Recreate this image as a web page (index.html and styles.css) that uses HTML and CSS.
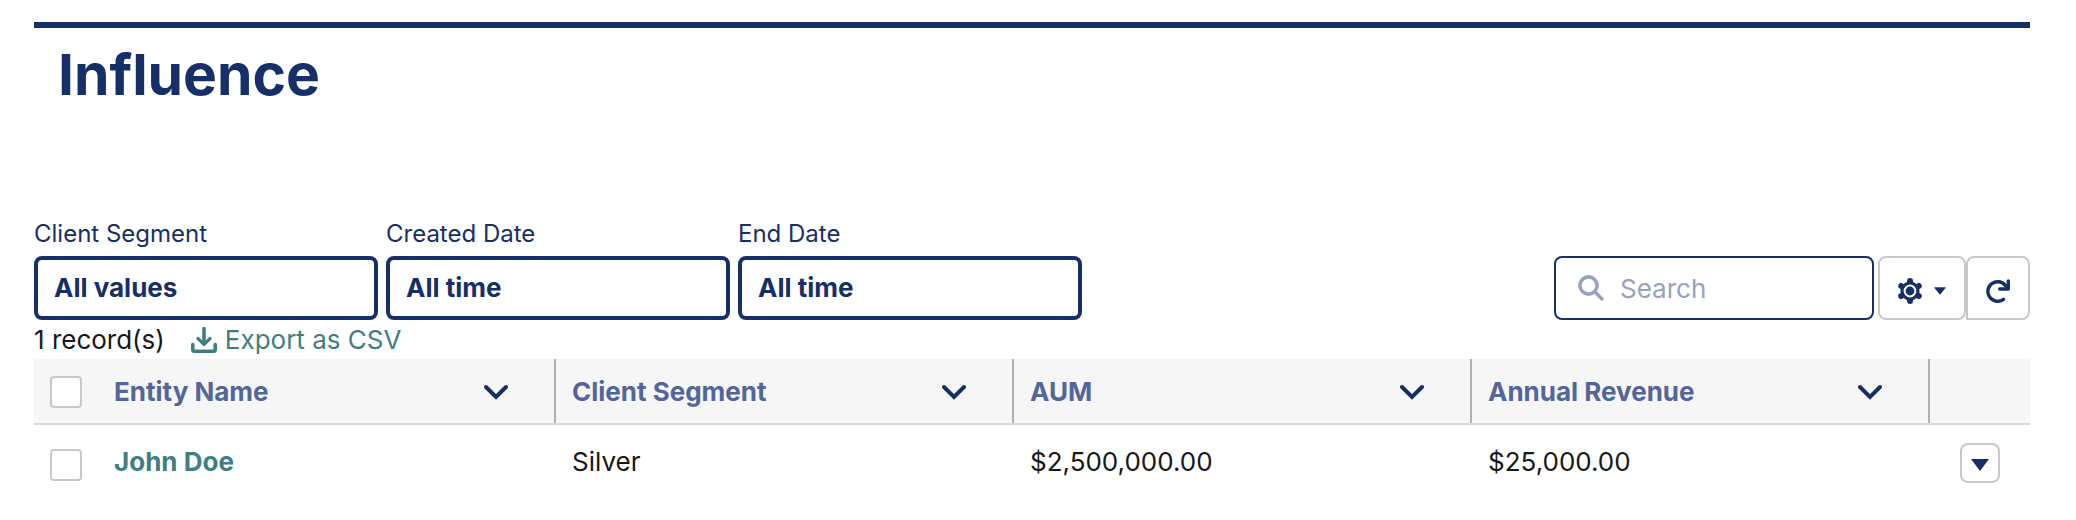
FILE: index.html
```html
<!DOCTYPE html>
<html lang="en">
<head>
    <meta charset="UTF-8">
    <meta name="viewport" content="width=device-width, initial-scale=1.0">
    <title>Influence</title>
    <link rel="stylesheet" href="styles.css">
</head>
<body>
    <div class="container">
        <h1>Influence</h1>

        <div class="toolbar">
            <div class="filters">
                <div class="filter">
                    <label for="segment">Client Segment</label>
                    <select id="segment"><option>All values</option></select>
                </div>
                <div class="filter">
                    <label for="created">Created Date</label>
                    <select id="created"><option>All time</option></select>
                </div>
                <div class="filter">
                    <label for="end">End Date</label>
                    <select id="end"><option>All time</option></select>
                </div>
            </div>
            <div class="actions">
                <label class="search">
                    <svg width="26" height="26" viewBox="0 0 26 26" fill="none" stroke="currentColor"><circle cx="10.5" cy="10.5" r="8.6" stroke-width="3.6"/><path d="M17 17l7 7" stroke-width="3.4" stroke-linecap="round"/></svg>
                    <input type="search" placeholder="Search" aria-label="Search">
                </label>
                <div class="button-group">
                    <button type="button" class="settings" aria-label="Settings">
                        <svg width="24" height="26" viewBox="0 0 24 26">
                            <path d="M12 3v20M3.2 8l17.6 10M3.2 18l17.6-10" stroke="currentColor" stroke-width="6" stroke-linecap="round"/>
                            <circle cx="12" cy="13" r="9.6" fill="currentColor"/>
                            <circle cx="12" cy="13" r="5.4" fill="currentColor" stroke="#fff" stroke-width="2"/>
                        </svg>
                        <svg width="12" height="8" viewBox="0 0 12 8" fill="currentColor"><path d="M.8.3h10.4q.8 0 .3.7L6.7 7q-.7.8-1.4 0L.5 1Q0 .3.8.3z"/></svg>
                    </button>
                    <button type="button" class="refresh" aria-label="Refresh">
                        <svg width="24" height="24" viewBox="0 0 24 24" fill="none" stroke="currentColor" stroke-linecap="round" stroke-linejoin="round"><path d="M17.5 20.4A9.8 9.8 0 1 1 19.5 6.6L21 8.4" stroke-width="3.4"/><path d="M22.3 2v8h-8.6" stroke-width="3.4"/></svg>
                    </button>
                </div>
            </div>
        </div>

        <div class="summary">
            <span>1 record(s)</span>
            <a href="#">
                <svg width="26" height="26" viewBox="0 0 26 26" fill="none" stroke="currentColor" stroke-linecap="round" stroke-linejoin="round"><path d="M1.8 17.5v5q0 1.7 1.7 1.7h19q1.7 0 1.7-1.7v-5" stroke-width="3.6"/><path d="M13 1.6V16" stroke-width="3.6"/><path d="M7 11.6l6 5.8 6-5.8" stroke-width="3.4"/></svg>
                Export as CSV
            </a>
        </div>

        <table>
            <colgroup>
                <col class="col-check">
                <col><col><col><col>
                <col class="col-action">
            </colgroup>
            <thead>
                <tr>
                    <th class="check"><input type="checkbox" aria-label="Select all"></th>
                    <th><div class="heading">Entity Name <svg width="24" height="16" viewBox="0 0 24 16"><path d="M2 3l10 10 10-10"/></svg></div></th>
                    <th><div class="heading">Client Segment <svg width="24" height="16" viewBox="0 0 24 16"><path d="M2 3l10 10 10-10"/></svg></div></th>
                    <th><div class="heading">AUM <svg width="24" height="16" viewBox="0 0 24 16"><path d="M2 3l10 10 10-10"/></svg></div></th>
                    <th><div class="heading">Annual Revenue <svg width="24" height="16" viewBox="0 0 24 16"><path d="M2 3l10 10 10-10"/></svg></div></th>
                    <th></th>
                </tr>
            </thead>
            <tbody>
                <tr>
                    <td class="check"><input type="checkbox" aria-label="Select John Doe"></td>
                    <td><a href="#">John Doe</a></td>
                    <td>Silver</td>
                    <td>$2,500,000.00</td>
                    <td>$25,000.00</td>
                    <td class="row-action">
                        <button type="button" aria-label="Row actions">
                            <svg width="18" height="12" viewBox="0 0 18 12" fill="currentColor"><path d="M0 0h18L9 12z"/></svg>
                        </button>
                    </td>
                </tr>
            </tbody>
        </table>
    </div>
</body>
</html>
```
FILE: styles.css
```css
* {
    box-sizing: border-box;
}
body {
    margin: 0;
    padding: 22px 46px 0 34px;
    font-family: Inter, "Liberation Sans", sans-serif;
    font-size: 26px;
    line-height: 32px;
    color: #181818;
    background-color: #fff;
}
svg {
    display: block;
    flex: none;
}
a {
    color: #3f7f83;
    text-decoration: none;
}
button, input, select {
    font: inherit;
    color: #172f68;
}
.container {
    border-top: 6px solid #172f68;
}
h1 {
    margin: 0;
    padding: 11px 24px 107px;
    font-size: 57px;
    line-height: 72px;
    font-weight: 700;
    color: #172f68;
}
.toolbar {
    display: flex;
    justify-content: space-between;
    align-items: flex-end;
}
.filters {
    display: flex;
    gap: 8px;
}
.filter label {
    display: block;
    margin-bottom: 6px;
    font-size: 24px;
    color: #172f68;
}
.filter select {
    display: block;
    appearance: none;
    width: 344px;
    height: 64px;
    padding: 0 16px;
    border: 4px solid #172f68;
    border-radius: 8px;
    background-color: #fff;
    font-weight: 700;
}
.actions {
    display: flex;
    gap: 4px;
}
.search {
    display: flex;
    align-items: center;
    gap: 16px;
    width: 320px;
    height: 64px;
    padding: 0 22px;
    border: 2px solid #172f68;
    border-radius: 8px;
    color: #97a1c2;
}
.search input {
    width: 100%;
    padding: 2px 0 0;
    border: none;
    outline: none;
    background: none;
}
.search input::placeholder {
    color: #97a1c2;
}
.button-group {
    display: flex;
}
button {
    display: flex;
    align-items: center;
    justify-content: center;
    padding: 0;
    border: 2px solid #c9c9c9;
    border-radius: 8px;
    background-color: #fff;
    cursor: pointer;
}
.settings {
    gap: 12px;
    width: 88px;
    height: 64px;
    padding-top: 6px;
}
.refresh {
    width: 64px;
    height: 64px;
    padding-top: 6px;
    border-bottom-left-radius: 0;
}
.summary {
    display: flex;
    gap: 26px;
    padding: 4px 0 3px;
}
.summary a {
    display: flex;
    align-items: center;
    gap: 8px;
}
table {
    width: 100%;
    table-layout: fixed;
    border-collapse: separate;
    border-spacing: 0;
}
.col-check {
    width: 64px;
}
.col-action {
    width: 100px;
}
th, td {
    padding: 0 16px;
    text-align: left;
}
th {
    height: 66px;
    padding-top: 2px;
    background: linear-gradient(#b0b0b0, #b0b0b0) right / 2px 100% no-repeat #f6f6f6;
    border-bottom: 2px solid #d9d7d7;
    color: #53659a;
    font-weight: 700;
}
th.check, th:last-child {
    background: #f6f6f6;
}
.heading {
    display: flex;
    align-items: center;
    justify-content: space-between;
    padding-right: 32px;
}
.heading svg {
    fill: none;
    stroke: #172f68;
    stroke-width: 4;
    stroke-linecap: round;
}
td {
    padding-top: 21px;
    vertical-align: top;
}
td a {
    font-weight: 700;
}
.check input {
    display: block;
    appearance: none;
    width: 32px;
    height: 32px;
    margin: 0;
    border: 2px solid #c9c9c9;
    border-radius: 4px;
    background-color: #fff;
}
td.check {
    padding-top: 24px;
}
td.row-action {
    padding-top: 18px;
}
.row-action button {
    width: 40px;
    height: 40px;
    margin-left: 14px;
    padding-top: 4px;
}
```
